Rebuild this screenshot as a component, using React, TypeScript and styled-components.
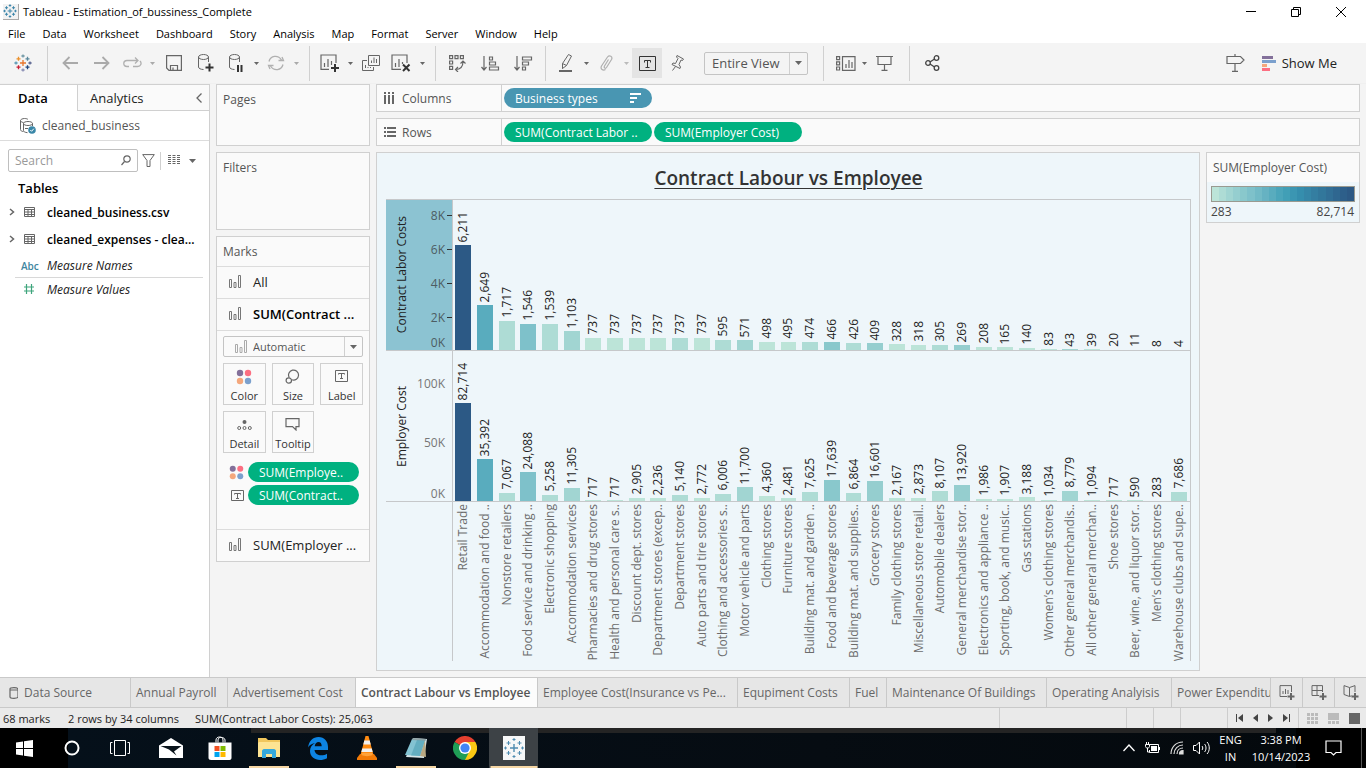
import React from "react";
import styled, { createGlobalStyle } from "styled-components";

const GlobalStyle = createGlobalStyle`
  *, *::before, *::after { box-sizing: border-box; }
  body { margin: 0; font-family: "Open Sans", "Noto Sans", sans-serif; font-size: 12px; color: #333; background: #f4f4f4; }
  button, input, select { font: inherit; color: inherit; }
  button { border: 0; padding: 0; margin: 0; background: none; display: flex; align-items: center; }
  a { color: inherit; text-decoration: none; }
  h1, h2, p, ul { margin: 0; padding: 0; font-weight: inherit; list-style: none; }
  svg { display: block; flex: none; }
`;

const line = "#d0d0d0";
const panel = "#fafafa";
const sheet = "#eef6fa";

/* ---------- data ---------- */

const steps = [
  "#bce4d8", "#aedcd5", "#a1d5d2", "#95cecf", "#89c8cc", "#7ec1ca", "#72bac6", "#66b2c2", "#59acbe", "#4ba5ba",
  "#419fb6", "#3b96b2", "#358ead", "#3586a7", "#347ea1", "#32779b", "#316f96", "#2f6790", "#2d5f8a", "#2c5985",
];

const stepFor = (cost: number) =>
  steps[Math.min(steps.length - 1, Math.floor(((cost - 283) / (82714 - 283)) * steps.length))];

type Business = [name: string, labor: number, employer: number];

const businesses: Business[] = [
  ["Retail Trade", 6211, 82714],
  ["Accommodation and food ..", 2649, 35392],
  ["Nonstore retailers", 1717, 7067],
  ["Food service and drinking ..", 1546, 24088],
  ["Electronic shopping", 1539, 5258],
  ["Accommodation services", 1103, 11305],
  ["Pharmacies and drug stores", 737, 717],
  ["Health and personal care s..", 737, 717],
  ["Discount dept. stores", 737, 2905],
  ["Department stores (excep..", 737, 2236],
  ["Department stores", 737, 5140],
  ["Auto parts and tire stores", 737, 2772],
  ["Clothing and accessories s..", 595, 6006],
  ["Motor vehicle and parts", 571, 11700],
  ["Clothing stores", 498, 4360],
  ["Furniture stores", 495, 2481],
  ["Building mat. and garden ..", 474, 7625],
  ["Food and beverage stores", 466, 17639],
  ["Building mat. and supplies..", 426, 6864],
  ["Grocery stores", 409, 16601],
  ["Family clothing stores", 328, 2167],
  ["Miscellaneous store retail..", 318, 2873],
  ["Automobile dealers", 305, 8107],
  ["General merchandise stor..", 269, 13920],
  ["Electronics and appliance ..", 208, 1986],
  ["Sporting, book, and music..", 165, 1907],
  ["Gas stations", 140, 3188],
  ["Women’s clothing stores", 83, 1034],
  ["Other general merchandis..", 43, 8779],
  ["All other general merchan..", 39, 1094],
  ["Shoe stores", 20, 717],
  ["Beer, wine, and liquor stor..", 11, 590],
  ["Men’s clothing stores", 8, 283],
  ["Warehouse clubs and supe..", 4, 7686],
];

/* ---------- icons ---------- */

type IconProps = { w: number; h: number; color?: string; sw?: number; children: React.ReactNode };
const Icon = ({ w, h, color = "#666", sw = 1, children }: IconProps) => (
  <svg width={w} height={h} viewBox={`0 0 ${w} ${h}`} fill="none" stroke={color} strokeWidth={sw} aria-hidden="true">
    {children}
  </svg>
);

const plus = (x: number, y: number, r: number) => `M${x - r} ${y}h${2 * r}M${x} ${y - r}v${2 * r}`;

const TableauMark = ({ size = 18, mono, sw = 1.3 }: { size?: number; mono?: string; sw?: number }) => {
  const c = (color: string) => mono ?? color;
  return (
    <svg width={size} height={size} viewBox="0 0 18 18" fill="none" strokeWidth={sw} aria-hidden="true">
      <path d={plus(9, 9, 3)} stroke={c("#e8762c")} />
      <path d={plus(4.5, 4.8, 2)} stroke={c("#eb912c")} />
      <path d={plus(13.5, 4.8, 2)} stroke={c("#59879b")} />
      <path d={plus(4.5, 13.2, 2)} stroke={c("#c72035")} />
      <path d={plus(13.5, 13.2, 2)} stroke={c("#1f447e")} />
      <path d={plus(9, 2, 1.6)} stroke={c("#7199a6")} />
      <path d={plus(9, 16, 1.6)} stroke={c("#8a8fb5")} />
      <path d={plus(2, 9, 1.6)} stroke={c("#5c9bb5")} />
      <path d={plus(16, 9, 1.6)} stroke={c("#5b6591")} />
    </svg>
  );
};

const Caret = ({ color = "#666", big }: { color?: string; big?: boolean }) => (
  <svg width={big ? 7 : 5} height={big ? 4 : 3} viewBox="0 0 6 4" preserveAspectRatio="none" aria-hidden="true">
    <path d="M0 0h6L3 4z" fill={color} />
  </svg>
);

const BarsIcon = ({ color = "#777" }: { color?: string }) => (
  <Icon w={12} h={13} color={color}>
    <path d="M.5 4.500h2v8h-2zM5 7.500h2v5h-2zM9.500 .5h2v12h-2z" />
  </Icon>
);

const TextIcon = ({ w = 13, h = 11, color = "#666" }: { w?: number; h?: number; color?: string }) => (
  <Icon w={w} h={h} color={color}>
    <path d={`M.5 .5h${w - 1}v${h - 1}h${1 - w}z`} />
    {w > 14 ? (
      <path d="M5.500 6.500v-2h6v2M8.500 4.500v7M6.500 11.500h4" />
    ) : (
      <path d="M3.500 4.500v-1h6v1M6.500 3.500v5M5 8.500h3" />
    )}
  </Icon>
);

const DotsIcon = ({ size = 16 }: { size?: number }) => (
  <svg width={size} height={size} viewBox="0 0 16 16" aria-hidden="true">
    <circle cx="4" cy="4" r="3.200" fill="#83709a" />
    <circle cx="12" cy="4" r="3.200" fill="#fc6f82" />
    <circle cx="4" cy="12" r="3.200" fill="#f4a77c" />
    <circle cx="12" cy="12" r="3.200" fill="#7ba0cd" />
  </svg>
);

const Cylinder = () => <path d="M.5 3v10c0 1.400 2.300 2.500 5 2.500M10.500 8V3M.5 3c0-1.400 2.300-2.500 5-2.500s5 1.100 5 2.500-2.300 2.500-5 2.500S.5 4.400.5 3z" />;

const TableIcon = () => (
  <Icon w={11} h={10}>
    <path d="M.5 .5h10v9h-10zM.5 2.500h10M.5 5h10M.5 7.500h10M4 2.500v7M7.500 2.500v7" />
  </Icon>
);

const Chevron = () => (
  <Icon w={6} h={8} sw={1.5}>
    <path d="M1 1l3.500 3L1 7" />
  </Icon>
);

/* ---------- window chrome ---------- */

const Window = styled.div`
  min-height: 100vh;
  display: flex;
  flex-direction: column;
`;

const TitleBar = styled.header`
  height: 23px;
  display: flex;
  align-items: center;
  padding: 0 3px;
  background: #fff;
  color: #000;
  font-size: 11px;
`;

const AppBadge = styled.span`
  display: flex;
  padding: 0 1px 1px 0;
  margin-right: 4px;
  border-right: 1px solid #aaa;
  border-bottom: 1px solid #aaa;
  background: #f2f2f2;
`;

const TitleText = styled.span`
  flex: 1;
`;

const WindowButton = styled.button`
  width: 45px;
  height: 20px;
  justify-content: center;
`;

const MenuBar = styled.nav`
  height: 20px;
  display: flex;
  align-items: center;
  background: #fff;
  color: #000;
  font-size: 11px;
  button { padding: 0 9px 0 8px; height: 20px; }
`;

/* ---------- toolbar ---------- */

const Toolbar = styled.div`
  height: 41px;
  display: flex;
  align-items: center;
  padding: 0 29px 0 6px;
  background: #f4f4f4;
  border-bottom: 1px solid #f0f0f0;
`;

const ToolButton = styled.button<{ $w?: number; $on?: boolean }>`
  width: ${(p) => p.$w ?? 28}px;
  height: 30px;
  flex: none;
  justify-content: center;
  background: ${(p) => (p.$on ? "#e4e4e4" : "transparent")};
`;

const ToolRule = styled.span`
  width: 1px;
  height: 35px;
  margin: 0 6px 0 7px;
  background: #d0d0d0;
`;

const ToolSpacer = styled.span`
  flex: 1;
`;

const ShowMe = styled.button`
  gap: 6px;
  margin-left: 12px;
  font-size: 13px;
  color: #222;
`;

const SelectBox = styled.div<{ $h: number; $size: number; $left: number }>`
  position: relative;
  height: ${(p) => p.$h}px;
  select {
    appearance: none;
    width: 100%;
    height: 100%;
    padding: 0 20px 0 ${(p) => p.$left}px;
    border: 1px solid #c4c4c4;
    border-radius: 2px;
    background: transparent;
    font-size: ${(p) => p.$size}px;
    color: #555;
  }
`;

const SelectArrow = styled.span`
  position: absolute;
  inset: 1px 1px 1px auto;
  width: 18px;
  display: flex;
  align-items: center;
  justify-content: center;
  border-left: 1px solid ${line};
  pointer-events: none;
`;

const SelectGlyph = styled.span`
  position: absolute;
  inset: 0 auto 0 12px;
  display: flex;
  align-items: center;
  pointer-events: none;
`;

const FitSelect = styled(SelectBox)`
  width: 104px;
  margin: 0 8px 0 12px;
`;

/* ---------- data pane ---------- */

const Workspace = styled.main`
  flex: 1;
  display: flex;
`;

const DataPane = styled.aside`
  width: 210px;
  flex: none;
  background: #fff;
  border-right: 1px solid ${line};
  border-top: 1px solid ${line};
`;

const PaneTabs = styled.div`
  height: 26px;
  display: flex;
  font-size: 13px;
`;

const PaneTab = styled.button<{ $active?: boolean }>`
  ${(p) =>
    p.$active
      ? "width: 77px; padding-left: 18px; font-weight: 600; color: #000;"
      : `flex: 1; padding: 0 7px 0 12px; justify-content: space-between; color: #222; background: ${panel}; border-left: 1px solid ${line}; border-bottom: 1px solid ${line};`}
`;

const SourceRow = styled.button`
  width: 100%;
  height: 30px;
  gap: 6px;
  padding-left: 20px;
  border-bottom: 1px solid #dcdcdc;
  color: #555;
`;

const SearchRow = styled.div`
  display: flex;
  align-items: center;
  padding: 8px 12px 0 8px;
`;

const SearchField = styled.label`
  width: 130px;
  height: 23px;
  display: flex;
  align-items: center;
  padding: 0 6px;
  border: 1px solid #bfbfbf;
  border-radius: 2px;
  input {
    flex: 1;
    min-width: 0;
    padding: 0;
    border: 0;
    outline: 0;
    background: none;
  }
  input::placeholder { color: #999; opacity: 1; }
`;

const SearchRule = styled.span`
  width: 1px;
  height: 18px;
  margin: 0 7px 0 5px;
  background: ${line};
`;

const SmallButton = styled.button<{ $left?: number }>`
  margin-left: ${(p) => p.$left ?? 0}px;
`;

const TablesTitle = styled.h2`
  padding: 7px 0 3px 18px;
  font-size: 13px;
  line-height: 18px;
  font-weight: 600;
  color: #000;
`;

const TableRow = styled.li`
  height: 27px;
  display: grid;
  grid-template-columns: 15px 23px 1fr;
  align-items: center;
  padding: 0 8px 3px 9px;
  font-weight: 600;
  color: #000;
  white-space: nowrap;
`;

const FieldRow = styled.li`
  height: 23px;
  display: grid;
  grid-template-columns: 32px 1fr;
  align-items: center;
  margin: 0 6px 0 15px;
  font-style: italic;
  color: #222;
  & + & { border-top: 1px solid #d8d8d8; }
`;

const FieldType = styled.span`
  padding-left: 6px;
  font-size: 10px;
  font-style: normal;
  font-weight: 600;
  color: #3f86a0;
`;

/* ---------- cards ---------- */

const Board = styled.div`
  flex: 1;
  min-width: 0;
  display: flex;
  gap: 6px;
  padding: 0 6px 6px;
`;

const CardColumn = styled.div`
  width: 154px;
  flex: none;
  display: flex;
  flex-direction: column;
  gap: 6px;
`;

const Card = styled.section<{ $h?: number }>`
  min-height: ${(p) => p.$h ?? 0}px;
  background: ${panel};
  border: 1px solid ${line};
`;

const CardTitle = styled.h2`
  padding: 0 6px;
  font-size: 12px;
  line-height: 29px;
  color: #555;
`;

const MarkRow = styled.button<{ $bold?: boolean }>`
  width: 100%;
  height: 32px;
  gap: 12px;
  padding: 0 0 2px 12px;
  border-top: 1px solid #dcdcdc;
  font-size: 13px;
  font-weight: ${(p) => (p.$bold ? 600 : 400)};
  color: ${(p) => (p.$bold ? "#000" : "#222")};
  white-space: nowrap;
`;

const MarkBody = styled.div`
  padding: 5px 6px 24px;
  border-top: 1px solid #dcdcdc;
`;

const MarkGrid = styled.div`
  display: grid;
  grid-template-columns: repeat(3, 1fr);
  gap: 6px;
  padding: 6px 0 9px;
`;

const MarkButton = styled.button`
  height: 42px;
  flex-direction: column;
  justify-content: space-between;
  padding: 5px 0 1px;
  border: 1px solid ${line};
  font-size: 11px;
  line-height: 15px;
  color: #333;
`;

const EncodedRow = styled.div`
  height: 20px;
  display: grid;
  grid-template-columns: 25px 111px;
  align-items: center;
  & + & { margin-top: 3px; }
  > svg { justify-self: end; margin-right: 4px; }
`;

const Pill = styled.button<{ $blue?: boolean; $w?: number }>`
  width: ${(p) => (p.$w ? `${p.$w}px` : "auto")};
  height: 20px;
  justify-content: space-between;
  padding: 0 11px;
  border-radius: 10px;
  background: ${(p) => (p.$blue ? "#4996b2" : "#00b180")};
  color: #fff;
  white-space: nowrap;
`;

/* ---------- shelves ---------- */

const Main = styled.div`
  flex: 1;
  min-width: 0;
  display: flex;
  flex-direction: column;
  gap: 6px;
`;

const Shelf = styled.div`
  height: 28px;
  display: flex;
  align-items: center;
  gap: 2px;
  background: ${panel};
  border: 1px solid ${line};
`;

const ShelfLabel = styled.span`
  width: 125px;
  height: 100%;
  display: grid;
  grid-template-columns: 18px 1fr;
  align-items: center;
  padding-left: 7px;
  border-right: 1px solid ${line};
  color: #555;
`;

const ViewRow = styled.div`
  flex: 1;
  display: flex;
  align-items: flex-start;
  gap: 6px;
`;

/* ---------- chart ---------- */

const View = styled.section`
  flex: 1;
  min-width: 0;
  align-self: stretch;
  display: flex;
  flex-direction: column;
  padding: 0 8px 9px 9px;
  background: ${sheet};
  border: 1px solid ${line};
`;

const ChartTitle = styled.h1`
  padding: 12px 0 8px;
  font-size: 19px;
  line-height: 26px;
  font-weight: 600;
  text-align: center;
  text-decoration: underline;
  text-decoration-thickness: 1px;
  text-underline-offset: 3px;
  color: #333;
`;

const ChartBand = styled.div<{ $names?: boolean }>`
  flex: ${(p) => (p.$names ? "0 0 160px" : "1 0 151px")};
  display: grid;
  grid-template-columns: 66px minmax(0, 1fr);
  border-top: 1px solid #c6c8ca;
`;

const AxisHead = styled.div<{ $selected?: boolean }>`
  position: relative;
  display: flex;
  align-items: center;
  padding-left: 8px;
  background: ${(p) => (p.$selected ? "#8cc3d2" : "transparent")};
  color: ${(p) => (p.$selected ? "#4d5d63" : "#777")};
`;

const Upright = styled.span`
  writing-mode: vertical-rl;
  transform: rotate(180deg);
  white-space: nowrap;
  line-height: 16px;
`;

const AxisTitle = styled(Upright)`
  color: #222;
`;

const Tick = styled.span<{ $dash?: boolean }>`
  position: absolute;
  right: 0;
  display: flex;
  align-items: center;
  gap: 2px;
  height: 16px;
  margin-bottom: -9px;
  &::after {
    content: "";
    width: 5px;
    height: 1px;
    background: ${(p) => (p.$dash ? "#333" : "transparent")};
  }
`;

const Plot = styled.div`
  display: grid;
  grid-template-columns: repeat(34, minmax(0, 1fr));
  border-left: 1px solid #c6c8ca;
  border-right: 1px solid #c6c8ca;
`;

const BarCell = styled.div`
  min-width: 0;
  display: flex;
  flex-direction: column;
  justify-content: flex-end;
  align-items: center;
  padding-right: 1px;
  color: #222;
`;

const BarValue = styled(Upright)`
  margin-bottom: 3px;
`;

const Bar = styled.span`
  width: 77%;
  flex: none;
`;

const NameCell = styled.div`
  min-width: 0;
  display: flex;
  justify-content: center;
  align-items: flex-start;
  padding: 2px 1px 0 0;
  color: #6c6c6c;
`;

type PaneProps = { title: string; field: 1 | 2; domain: number; ticks: number[]; selected?: boolean };

const ChartPane = ({ title, field, domain, ticks, selected }: PaneProps) => (
  <ChartBand>
    <AxisHead $selected={selected}>
      <AxisTitle>{title}</AxisTitle>
      {ticks.map((t) => (
        <Tick key={t} $dash={selected && t > 0} style={{ bottom: `${Math.max(6, (t / domain) * 100)}%` }}>
          {t / 1000}K
        </Tick>
      ))}
    </AxisHead>
    <Plot>
      {businesses.map((b) => (
        <BarCell key={b[0]}>
          <BarValue>{b[field].toLocaleString("en-US")}</BarValue>
          <Bar style={{ height: `${(b[field] / domain) * 100}%`, background: stepFor(b[2]) }} />
        </BarCell>
      ))}
    </Plot>
  </ChartBand>
);

/* ---------- legend ---------- */

const Legend = styled(Card)`
  width: 154px;
  flex: none;
  background: ${sheet};
`;

const LegendTitle = styled(CardTitle)`
  background: ${panel};
`;

const Ramp = styled.div`
  height: 16px;
  display: flex;
  margin: 4px 4px 0;
  border: 1px solid #9a9a90;
`;

const RampStep = styled.span<{ $color: string }>`
  flex: 1;
  background: ${(p) => p.$color};
`;

const RampEnds = styled.div`
  display: flex;
  justify-content: space-between;
  padding: 1px 5px 1px 4px;
  line-height: 18px;
  color: #444;
`;

/* ---------- sheet tabs and status ---------- */

const SheetTabs = styled.nav`
  height: 31px;
  display: flex;
  background: #e6e6e6;
  border-top: 1px solid #c9c9c9;
  border-bottom: 1px solid #c9c9c9;
  color: #666;
`;

const TabStrip = styled.div`
  flex: 1;
  min-width: 0;
  display: flex;
  overflow: hidden;
`;

const SheetTab = styled.button<{ $w: number; $active?: boolean }>`
  flex: 0 0 ${(p) => p.$w}px;
  gap: 6px;
  padding-left: 5px;
  border-right: 1px solid #c9c9c9;
  white-space: nowrap;
  font-weight: ${(p) => (p.$active ? 600 : 400)};
  color: ${(p) => (p.$active ? "#555" : "#666")};
  background: ${(p) => (p.$active ? "#fcfcfc" : "transparent")};
`;

const NewButton = styled.button`
  width: 32px;
  justify-content: center;
  border-left: 1px solid #c9c9c9;
`;

const StatusBar = styled.footer`
  height: 20px;
  display: flex;
  align-items: center;
  background: #eaeaea;
  font-size: 11px;
  color: #222;
`;

const StatusText = styled.span<{ $w?: number }>`
  padding-left: 3px;
  ${(p) => (p.$w ? `width: ${p.$w}px;` : "flex: 1;")}
`;

const StatusCell = styled.span<{ $w: number }>`
  width: ${(p) => p.$w}px;
  height: 20px;
  display: flex;
  align-items: center;
  gap: 10px;
  padding-left: 8px;
  border-left: 1px solid #cdcdcd;
`;

/* ---------- taskbar ---------- */

const Taskbar = styled.footer`
  height: 40px;
  display: flex;
  color: #fff;
  font-size: 11px;
  background:
    linear-gradient(#242424, #242424) no-repeat 251px 0 / calc(100% - 341px) 5px,
    linear-gradient(90deg, #000 68px, #05101a 68px, #060c12 60%, #04090d calc(100% - 70px), #000 calc(100% - 70px));
`;

const TaskButton = styled.button<{ $w?: number; $line?: number; $active?: boolean }>`
  position: relative;
  width: ${(p) => p.$w ?? 49}px;
  height: 40px;
  justify-content: center;
  background: ${(p) => (p.$active ? "#3d4246" : "transparent")};
  &::after {
    content: "";
    position: absolute;
    bottom: 0;
    left: 50%;
    width: ${(p) => p.$line ?? 0}px;
    height: 2px;
    transform: translateX(-50%);
    background: #f5d6a4;
  }
`;

const TaskGroup = styled.div`
  flex: 1;
  display: flex;
  padding-left: 2px;
`;

const Tray = styled.div`
  display: flex;
  align-items: center;
  padding-right: 4px;
`;

const TrayButton = styled.button<{ $w: number }>`
  width: ${(p) => p.$w}px;
  height: 40px;
  flex-direction: column;
  justify-content: center;
  line-height: 17px;
`;

const TrayEdge = styled.span`
  width: 1px;
  height: 40px;
  background: #555;
`;

const menus = ["File", "Data", "Worksheet", "Dashboard", "Story", "Analysis", "Map", "Format", "Server", "Window", "Help"];

const sheets: [string, number][] = [
  ["Annual Payroll", 97],
  ["Advertisement Cost", 128],
  ["Contract Labour vs Employee", 182],
  ["Employee Cost(Insurance vs Pe...", 200],
  ["Equpiment Costs", 112],
  ["Fuel", 37],
  ["Maintenance Of Buildings", 160],
  ["Operating Analyisis", 125],
  ["Power Expenditu", 140],
];

const DropCaret = ({ color }: { color?: string }) => (
  <ToolButton $w={12} aria-label="More options">
    <Caret color={color} />
  </ToolButton>
);

const MainToolbar = () => (
  <Toolbar>
    <ToolButton $w={34} aria-label="Start page"><TableauMark /></ToolButton>
    <ToolRule />
    <ToolButton $w={32} aria-label="Undo">
      <Icon w={16} h={14} color="#aaa" sw={1.8}><path d="M16 7H1.500M7.500 1L1.500 7l6 6" /></Icon>
    </ToolButton>
    <ToolButton $w={32} aria-label="Redo">
      <Icon w={16} h={14} color="#aaa" sw={1.8}><path d="M0 7h14.500M8.500 1l6 6-6 6" /></Icon>
    </ToolButton>
    <ToolButton aria-label="Replay">
      <Icon w={19} h={12} color="#b0b0b0" sw={1.3}><path d="M6 9.500H4C-.3 9.500-.3 3.500 4 3.500h10.500M12 .5l3 3-3 3M10 9.500h4.500c3.500 0 4.500-3.500 2.500-5.500" /></Icon>
    </ToolButton>
    <DropCaret color="#aaa" />
    <ToolButton $w={32} aria-label="Save">
      <Icon w={16} h={16} sw={1.2}><path d="M.6 .6h14.800v14.800H3L.6 13zM4.500 15v-4.500h7V15M7 12.500V15" /></Icon>
    </ToolButton>
    <ToolButton $w={32} aria-label="New data source">
      <Icon w={16} h={18}><Cylinder /><path d="M11.500 9.500v8M7.500 13.500h8" stroke="#333" strokeWidth="2" /></Icon>
    </ToolButton>
    <ToolButton aria-label="Pause auto updates">
      <Icon w={14} h={18}><Cylinder /><path d="M9 11v7M12.500 11v7" stroke="#333" strokeWidth="2" /></Icon>
    </ToolButton>
    <DropCaret />
    <ToolButton aria-label="Run update">
      <Icon w={18} h={16} color="#b0b0b0" sw={1.3}><path d="M2 6.500C3.500 .5 11 -.5 14.500 5M16 9.500C14.500 15.500 7 16.500 3.500 11M11.500 5.500h5L15 2M6.500 10.500h-5L3 14" /></Icon>
    </ToolButton>
    <DropCaret color="#aaa" />
    <ToolRule />
    <ToolButton aria-label="New worksheet">
      <Icon w={20} h={18} sw={1.2}><path d="M9 15.400H1V1h15v8M4.500 13V9M8 13V5M11.500 11V7" /><path d="M15 10v8M11 14h8" stroke="#333" strokeWidth="2" /></Icon>
    </ToolButton>
    <DropCaret />
    <ToolButton $w={30} aria-label="Duplicate">
      <Icon w={18} h={16}><path d="M6.500 .5h11v10h-11zM5 5.500H.5v10h11V12M9.500 8V5.500M12 8V2.500M14.500 8V4M3.500 13V10M6 13v-1M8.500 13v-1" /></Icon>
    </ToolButton>
    <ToolButton $w={30} aria-label="Clear sheet">
      <Icon w={20} h={18} sw={1.2}><path d="M10 15.400H1V1h15v8M4.500 13V9M8 13V5M11.500 10V8" /><path d="M12 10.500l6.500 6.500M18.500 10.500L12 17" stroke="#333" strokeWidth="2" /></Icon>
    </ToolButton>
    <DropCaret />
    <ToolRule />
    <ToolButton $w={30} aria-label="Swap rows and columns">
      <Icon w={17} h={17} sw={1.2}><path d="M.6 .6h3v3h-3zM6 .6h3v3h-3zM11.400 .6h3v3h-3zM.6 6h3v3h-3zM.6 11.400h3v3h-3zM14 6.500c0 5-2 8-7.500 8M11.500 8.500L14 6l2.500 2.500M9 12l-2.500 2.500L9 17" /></Icon>
    </ToolButton>
    <ToolButton $w={36} aria-label="Sort ascending">
      <Icon w={19} h={15} sw={1.2}><path d="M3 0v14M.5 11L3 14l2.500-3M8.500 1h3v3h-3zM8.500 6h6v3h-6zM8.500 11h9v3h-9z" /></Icon>
    </ToolButton>
    <ToolButton $w={30} aria-label="Sort descending">
      <Icon w={19} h={15} sw={1.2}><path d="M3 0v14M.5 11L3 14l2.500-3M8.500 1h9v3h-9zM8.500 6h6v3h-6zM8.500 11h3v3h-3z" /></Icon>
    </ToolButton>
    <ToolRule />
    <ToolButton aria-label="Highlight">
      <Icon w={14} h={18}><path d="M9.500 .5l3 1.500-5 9.500-4 3v-5zM3.500 9.500l4 2M3.500 14.500v-2" /><path d="M0 17h13" strokeWidth="2" /></Icon>
    </ToolButton>
    <DropCaret />
    <ToolButton aria-label="Group members">
      <Icon w={13} h={16} color="#b0b0b0" sw={1.2}><path d="M8.500 4.500l-4 6.500c-1 2 1 3 2 1.500l5-8c1.500-3-2-5-4-2.500l-6 9c-1.500 3 1.500 5 4 3.500" /></Icon>
    </ToolButton>
    <DropCaret color="#bbb" />
    <ToolButton $w={30} $on aria-label="Show mark labels"><TextIcon w={17} h={15} color="#333" /></ToolButton>
    <ToolButton $w={30} aria-label="Fix axes">
      <Icon w={13} h={16}><path d="M6 .5l6.500 3.500-1 1.500-1.500-.5-2 4.500 1.500 2.500-.5 1.500-8-4 1-1.500 2.500.5L7 3.500 5.500 2zM4.500 11.500l-3 4" /></Icon>
    </ToolButton>
    <FitSelect $h={23} $size={13} $left={7}>
      <select aria-label="Fit" defaultValue="Entire View"><option>Entire View</option><option>Standard</option></select>
      <SelectArrow><Caret big /></SelectArrow>
    </FitSelect>
    <ToolRule />
    <ToolButton $w={32} aria-label="Show or hide cards">
      <Icon w={20} h={15} sw={1.2}><path d="M.6 .6h3v3h-3zM.6 5.800h3v3h-3zM.6 11h3v3h-3zM6.500 .6H19v13.800H6.500zM10 12V8M13 12V4M16 12V6" /></Icon>
    </ToolButton>
    <Caret />
    <ToolButton $w={35} aria-label="Presentation mode">
      <Icon w={17} h={16} sw={1.2}><path d="M0 1.500h17M2 2v7.500h13V2M8.500 9.500V15M5.500 15.400h6" /></Icon>
    </ToolButton>
    <ToolRule />
    <ToolButton $w={32} aria-label="Share">
      <Icon w={15} h={16} color="#444" sw={1.3}><circle cx="3" cy="8" r="2.300" /><circle cx="11.500" cy="3" r="2.300" /><circle cx="11.500" cy="13" r="2.300" /><path d="M5 7l4.500-3M5 9l4.500 3" /></Icon>
    </ToolButton>
    <ToolSpacer />
    <ToolButton aria-label="Guide">
      <Icon w={19} h={18} sw={1.2}><path d="M9 0v2M1 2.500h13.500L18 6l-3.500 3.500H1zM9 9.500V17M6 17.400h6" /></Icon>
    </ToolButton>
    <ShowMe>
      <svg width="14" height="15" viewBox="0 0 14 15" aria-hidden="true">
        <path d="M0 0h11v3H0z" fill="#83709a" /><path d="M0 4h14v3H0z" fill="#7ba0cd" />
        <path d="M0 8h5v3H0z" fill="#f4a77c" /><path d="M0 12h8v3H0z" fill="#fc6f82" />
      </svg>
      Show Me
    </ShowMe>
  </Toolbar>
);

const FieldsPane = () => (
  <DataPane>
    <PaneTabs>
      <PaneTab $active>Data</PaneTab>
      <PaneTab>
        Analytics
        <Icon w={6} h={10} sw={1.3}><path d="M5.500 .5L1 5l4.500 4.500" /></Icon>
      </PaneTab>
    </PaneTabs>
    <SourceRow>
      <Icon w={16} h={16}>
        <path d="M.5 2.500v9c0 1 1 2 3 2M.5 2.500c0-1 2-2 4-2s3 .5 3.500 1M.5 2.500c0 1 1 1.800 3 2M3.500 5.500c0-1.200 2-2 4.500-2s4.500.8 4.500 2-2 2-4.500 2-4.500-.8-4.500-2zM3.500 5.500v7c0 1 1.500 2 4 2.200M12.500 5.500V8M5 10.500h3" />
        <circle cx="12" cy="12" r="3.800" fill="#3a87a8" stroke="none" />
        <path d="M10.300 12l1.300 1.300 2.200-2.600" stroke="#fff" />
      </Icon>
      cleaned_business
    </SourceRow>
    <SearchRow>
      <SearchField>
        <input type="text" placeholder="Search" aria-label="Search" />
        <Icon w={10} h={11} sw={1.2}><circle cx="6" cy="4" r="3.200" /><path d="M3.500 6.500L.5 10" /></Icon>
      </SearchField>
      <SmallButton $left={4} aria-label="Filter fields">
        <Icon w={13} h={13}><path d="M.7 .6h11.600L8 6.500v6H5v-6z" /></Icon>
      </SmallButton>
      <SearchRule />
      <SmallButton aria-label="View">
        <Icon w={12} h={11}><path d="M0 .5h12M0 2.500h12M0 4.500h12M0 6.500h12M0 8.500h12" strokeDasharray="3 1.500" /></Icon>
      </SmallButton>
      <SmallButton $left={9} aria-label="View options"><Caret big /></SmallButton>
    </SearchRow>
    <TablesTitle>Tables</TablesTitle>
    <ul>
      <TableRow><Chevron /><TableIcon />cleaned_business.csv</TableRow>
      <TableRow><Chevron /><TableIcon />cleaned_expenses - clea...</TableRow>
      <FieldRow><FieldType>Abc</FieldType>Measure Names</FieldRow>
      <FieldRow>
        <FieldType><Icon w={16} h={10} color="#3ea57c" sw={1.2}><path d="M5.500 0v10M10.500 0v10M3 3h10M3 7h10" /></Icon></FieldType>
        Measure Values
      </FieldRow>
    </ul>
  </DataPane>
);

const MarksCard = () => (
  <Card>
    <CardTitle>Marks</CardTitle>
    <MarkRow><BarsIcon />All</MarkRow>
    <MarkRow $bold><BarsIcon />SUM(Contract ...</MarkRow>
    <MarkBody>
      <SelectBox $h={21} $size={11} $left={29}>
        <select aria-label="Mark type" defaultValue="Automatic"><option>Automatic</option><option>Bar</option></select>
        <SelectGlyph><BarsIcon color="#aaa" /></SelectGlyph>
        <SelectArrow><Caret big /></SelectArrow>
      </SelectBox>
      <MarkGrid>
        <MarkButton><DotsIcon />Color</MarkButton>
        <MarkButton><Icon w={15} h={15} sw={1.2}><path d="M4.200 8.500A5 5 0 1 1 7 10.800" /><circle cx="3.800" cy="11.500" r="2.700" /></Icon>Size</MarkButton>
        <MarkButton><Icon w={13} h={13}><path d="M.5 1.500h12v11H.5zM3.500 5.500v-1h6v1M6.500 4.500v5M5 9.500h3" /></Icon>Label</MarkButton>
        <MarkButton>
          <Icon w={15} h={15}><circle cx="7.500" cy="5" r="2" fill="#666" stroke="none" /><circle cx="2.200" cy="11" r="1.500" /><circle cx="7.500" cy="11" r="1.500" /><circle cx="12.800" cy="11" r="1.500" /></Icon>
          Detail
        </MarkButton>
        <MarkButton><Icon w={15} h={14} sw={1.2}><path d="M1 1.600h13v8h-3v3.400L7.500 9.600H1z" /></Icon>Tooltip</MarkButton>
      </MarkGrid>
      <EncodedRow><DotsIcon size={15} /><Pill>SUM(Employe..</Pill></EncodedRow>
      <EncodedRow><TextIcon /><Pill>SUM(Contract..</Pill></EncodedRow>
    </MarkBody>
    <MarkRow><BarsIcon />SUM(Employer ...</MarkRow>
  </Card>
);

const NewBadge = () => <path d="M12 8v7M8.500 11.500h7" strokeWidth="2" />;

const SheetTabBar = () => (
  <SheetTabs>
    <TabStrip>
      <SheetTab $w={131}>
        <Icon w={13} h={12} sw={1.2}><path d="M5 2c0-1 1.500-1.300 4-1.300s4 .3 4 1.300v8c0 1-1.500 1.300-4 1.300S5 11 5 10zM5 3h8" /></Icon>
        Data Source
      </SheetTab>
      {sheets.map(([name, w]) => (
        <SheetTab key={name} $w={w} $active={name === "Contract Labour vs Employee"}>{name}</SheetTab>
      ))}
    </TabStrip>
    <NewButton aria-label="New worksheet"><Icon w={16} h={15}><path d="M8 11.500H1V.6h11.500V7M4 9V6M6.500 9V4M9 9V5" /><NewBadge /></Icon></NewButton>
    <NewButton aria-label="New dashboard"><Icon w={16} h={15}><path d="M8 10.500H1V.6h10.500V7M1 5.500h10.500M6 .6v10" /><NewBadge /></Icon></NewButton>
    <NewButton aria-label="New story"><Icon w={16} h={15}><path d="M6.500 2.500v9L1 9.500V.6l5.500 1.900L12 .6V7M6.500 11.500l2-.7" /><NewBadge /></Icon></NewButton>
  </SheetTabs>
);

const Status = () => (
  <StatusBar>
    <StatusText $w={65}>68 marks</StatusText>
    <StatusText $w={127}>2 rows by 34 columns</StatusText>
    <StatusText>SUM(Contract Labor Costs): 25,063</StatusText>
    <StatusCell $w={127} />
    <StatusCell $w={27} />
    <StatusCell $w={27} />
    <StatusCell $w={47} />
    <StatusCell $w={71}>
      <button aria-label="First sheet"><svg width="7" height="8" aria-hidden="true"><path d="M0 0h1v8H0zM7 0v8L2 4z" fill="#444" /></svg></button>
      <button aria-label="Previous sheet"><svg width="5" height="8" aria-hidden="true"><path d="M5 0v8L0 4z" fill="#444" /></svg></button>
      <button aria-label="Next sheet"><svg width="5" height="8" aria-hidden="true"><path d="M0 0v8l5-4z" fill="#444" /></svg></button>
      <button aria-label="Last sheet"><svg width="7" height="8" aria-hidden="true"><path d="M6 0h1v8H6zM0 0v8l5-4z" fill="#444" /></svg></button>
    </StatusCell>
    <StatusCell $w={68}>
      <button aria-label="Sheet sorter"><svg width="11" height="11" aria-hidden="true"><path d="M0 0h3v3H0zM4 0h3v3H4zM8 0h3v3H8zM0 4h3v3H0zM4 4h3v3H4zM8 4h3v3H8zM0 8h3v3H0zM4 8h3v3H4zM8 8h3v3H8z" fill="#bbb" /></svg></button>
      <button aria-label="Filmstrip"><svg width="11" height="11" aria-hidden="true"><path d="M0 0h11v7H0zM0 8h3v3H0zM4 8h3v3H4zM8 8h3v3H8z" fill="#bbb" /></svg></button>
      <button aria-label="Tabs"><svg width="11" height="11" aria-hidden="true"><path d="M0 0h11v11H0z" fill="#666" /></svg></button>
    </StatusCell>
  </StatusBar>
);

const SystemBar = () => (
  <Taskbar>
    <TaskButton $w={48} aria-label="Start">
      <svg width="17" height="17" viewBox="0 0 17 17" fill="#fff" aria-hidden="true"><path d="M0 2.500l7-1V8H0zM8 1.300L17 0v8H8zM0 9h7v6.500l-7-1zM8 9h9v8l-9-1.300z" /></svg>
    </TaskButton>
    <TaskButton $w={48} aria-label="Search"><Icon w={16} h={16} color="#fff" sw={2}><circle cx="8" cy="8" r="6.500" /></Icon></TaskButton>
    <TaskButton $w={48} aria-label="Task view">
      <Icon w={20} h={16} color="#fff"><path d="M4.500 .5h11v15h-11zM2.500 2.500h-2v11h2M17.500 2.500h2v11h-2" /></Icon>
    </TaskButton>
    <TaskGroup>
      <TaskButton aria-label="Mail">
        <svg width="24" height="20" viewBox="0 0 24 20" aria-hidden="true"><path d="M0 7.500L12 0l12 7.500V20H0z" fill="#fff" /><path d="M1.500 8h21L15 13.500l2.500 4L10 11.500z" fill="#0a141c" /></svg>
      </TaskButton>
      <TaskButton aria-label="Store">
        <svg width="24" height="24" viewBox="0 0 24 24" aria-hidden="true">
          <path d="M8 6.500V4c0-4 7-4 7 0v2.500M10 6.500V4c0-4 7-3 7 0v2.500" fill="none" stroke="#fff" />
          <path d="M.5 6.500h23V22c0 1-1 2-2 2H3c-1.500 0-2.500-1-2.500-2z" fill="#fff" />
          <path d="M6.500 10h5v5h-5z" fill="#f25022" /><path d="M12.500 10h5v5h-5z" fill="#7fba00" />
          <path d="M6.500 16h5v5h-5z" fill="#00a4ef" /><path d="M12.500 16h5v5h-5z" fill="#ffb900" />
        </svg>
      </TaskButton>
      <TaskButton $line={40} aria-label="File Explorer">
        <svg width="22" height="20" viewBox="0 0 22 20" aria-hidden="true">
          <path d="M0 0h8l2 2h12v17H0z" fill="#f0c65c" /><path d="M1 4h21v15H0V5z" fill="#fde493" />
          <path d="M4 20v-7c0-1 1-2 2-2h10c1 0 2 1 2 2v7h-4v-4H8v4z" fill="#35a9dc" />
        </svg>
      </TaskButton>
      <TaskButton aria-label="Edge">
        <svg width="20" height="23" viewBox="0 0 20 23" aria-hidden="true">
          <path d="M0 10.500C1 4 5 0 10.500 0 16.500 0 20 4.500 20 10v3H6.500c.3 3.500 3.500 5.300 6.500 5.300 2.500 0 4.500-.6 6-1.600v4.500c-2 1.200-4.500 1.800-7 1.800C6.500 23 2 19.500 2 14c0-3.500 2-6.500 5-8C3.500 6.500 1 8.500 0 10.500zM6.700 9.300h7C13.700 6.500 12.500 5 10.500 5S7 6.800 6.700 9.300z" fill="#0d84e3" />
        </svg>
      </TaskButton>
      <TaskButton aria-label="VLC">
        <svg width="20" height="24" viewBox="0 0 20 24" aria-hidden="true">
          <path d="M8.500 0h3l5 19H3.500z" fill="#ff8b12" /><path d="M7.300 4.500h5.400l1 4H6.300zM5.200 12.500h9.600l.9 3.500H4.300z" fill="#f1f1f1" />
          <path d="M3 18h14l3 4v2H0v-2z" fill="#f27a07" /><path d="M4.500 17h11v2c-3 1.500-8 1.500-11 0z" fill="#ffa23a" />
        </svg>
      </TaskButton>
      <TaskButton $line={40} aria-label="Notepad">
        <svg width="24" height="23" viewBox="0 0 24 23" aria-hidden="true">
          <path d="M9 1l14 1-3 19L2 20z" fill="#d7e6e8" /><path d="M8 2l13 1-5 16L1 18z" fill="#83c3d2" /><path d="M16 19l5-16 1 17z" fill="#b9a983" /><path d="M9 1l13 1-.5 2L8 3z" fill="#8fa3a6" />
          <path d="M13 3l8 .5-5 15.500-9-.500z" fill="#4fa0b4" opacity=".6" />
        </svg>
      </TaskButton>
      <TaskButton aria-label="Chrome">
        <svg width="24" height="24" viewBox="0 0 24 24" aria-hidden="true">
          <path d="M12 12L1.600 6A12 12 0 0 1 22.400 6z" fill="#e5402f" /><path d="M12 12V6h10.400A12 12 0 0 1 12 24z" fill="#fbc813" /><path d="M12 12l3.500 5L12 24A12 12 0 0 1 1.600 6z" fill="#1f9e56" />
          <circle cx="12" cy="12" r="6" fill="#fff" /><circle cx="12" cy="12" r="4.600" fill="#4285f4" />
        </svg>
      </TaskButton>
      <TaskButton $line={47} $active aria-label="Tableau">
        <svg width="22" height="24" viewBox="0 0 22 24" aria-hidden="true"><path d="M0 0h22v24H0z" fill="#f6f7f8" /><g fill="none" stroke="#4d8bb0"><path d={plus(11, 12, 4)} strokeWidth="1.400" /><path d={plus(5.500, 7, 2) + plus(16.500, 7, 2) + plus(5.500, 17, 2) + plus(16.500, 17, 2) + plus(11, 3.500, 1.500) + plus(11, 20.500, 1.500) + plus(2.500, 12, 1.500) + plus(19.500, 12, 1.500)} /></g></svg>
      </TaskButton>
    </TaskGroup>
    <Tray>
      <TrayButton $w={24} aria-label="Hidden icons"><Icon w={12} h={8} color="#fff" sw={1.3}><path d="M.5 7L6 1l5.500 6" /></Icon></TrayButton>
      <TrayButton $w={24} aria-label="Battery">
        <Icon w={16} h={12} color="#fff"><path d="M4.500 2.500h9v8h-9V8M14.500 5v3" /><path d="M6 4h6v5H6z" fill="#fff" stroke="none" /><path d="M.5 2.500h4v2c0 2-4 2-4 0zM1.500 0v2M3.500 0v2M2.500 6v4h2" /></Icon>
      </TrayButton>
      <TrayButton $w={24} aria-label="Network">
        <Icon w={14} h={14} color="#ddd" sw={1.2}><path d="M1 13C1 6 6 1 13 1M4 13c0-5 4-9 9-9M7 13c0-3.500 2.500-6 6-6" /><path d="M9.500 13c0-2 1.500-3.500 3.500-3.500V13z" fill="#ddd" /></Icon>
      </TrayButton>
      <TrayButton $w={24} aria-label="Volume">
        <Icon w={17} h={14} color="#fff"><path d="M.5 4.500h2.500l3.500-3.500v12L3 9.500H.5zM9 5c1 1 1 3 0 4M11.500 3c2 2 2 6 0 8M14 1c3 3 3 9 0 12" /></Icon>
      </TrayButton>
      <TrayButton $w={35}><span>ENG</span><span>IN</span></TrayButton>
      <TrayButton $w={66}><span>3:38 PM</span><span>10/14/2023</span></TrayButton>
      <TrayButton $w={39} aria-label="Notifications">
        <Icon w={17} h={16} color="#fff" sw={1.2}><path d="M1 1h15v11.500h-5L8.500 15 6 12.500H1z" /></Icon>
      </TrayButton>
      <TrayButton $w={8} aria-label="Show desktop" />
      <TrayEdge />
    </Tray>
  </Taskbar>
);

export default function App() {
  return (
    <>
      <GlobalStyle />
      <Window>
        <TitleBar>
          <AppBadge><TableauMark size={14} mono="#3d86ab" /></AppBadge>
          <TitleText>Tableau - Estimation_of_bussiness_Complete</TitleText>
          <WindowButton aria-label="Minimize"><Icon w={10} h={1} color="#000"><path d="M0 .5h10" /></Icon></WindowButton>
          <WindowButton aria-label="Restore"><Icon w={10} h={10} color="#000"><path d="M.5 2.500h7v7h-7zM2.500 2.500v-2h7v7h-2" /></Icon></WindowButton>
          <WindowButton aria-label="Close"><Icon w={10} h={10} color="#000"><path d="M0 0l10 10M10 0L0 10" /></Icon></WindowButton>
        </TitleBar>
        <MenuBar>
          {menus.map((m) => <button key={m}>{m}</button>)}
        </MenuBar>
        <MainToolbar />
        <Workspace>
          <FieldsPane />
          <Board>
            <CardColumn>
              <Card $h={62}><CardTitle>Pages</CardTitle></Card>
              <Card $h={78}><CardTitle>Filters</CardTitle></Card>
              <MarksCard />
            </CardColumn>
            <Main>
              <Shelf>
                <ShelfLabel>
                  <Icon w={10} h={12} sw={2}><path d="M1 0v2M5 0v2M9 0v2M1 3v9M5 3v9M9 3v9" /></Icon>
                  Columns
                </ShelfLabel>
                <Pill $blue $w={148}>
                  Business types
                  <Icon w={11} h={10} color="#fff" sw={2}><path d="M0 1h11M0 5h7M0 9h4" /></Icon>
                </Pill>
              </Shelf>
              <Shelf>
                <ShelfLabel>
                  <Icon w={12} h={10} sw={2}><path d="M0 1h2M0 5h2M0 9h2M3 1h9M3 5h9M3 9h9" /></Icon>
                  Rows
                </ShelfLabel>
                <Pill $w={148}>SUM(Contract Labor ..</Pill>
                <Pill $w={148}>SUM(Employer Cost)</Pill>
              </Shelf>
              <ViewRow>
                <View>
                  <ChartTitle>Contract Labour vs Employee</ChartTitle>
                  <ChartPane title="Contract Labor Costs" field={1} domain={8880} ticks={[8000, 6000, 4000, 2000, 0]} selected />
                  <ChartPane title="Employer Cost" field={2} domain={126500} ticks={[100000, 50000, 0]} />
                  <ChartBand $names>
                    <span />
                    <Plot>
                      {businesses.map(([name]) => (
                        <NameCell key={name}><Upright>{name}</Upright></NameCell>
                      ))}
                    </Plot>
                  </ChartBand>
                </View>
                <Legend>
                  <LegendTitle>SUM(Employer Cost)</LegendTitle>
                  <Ramp>{steps.map((c) => <RampStep key={c} $color={c} />)}</Ramp>
                  <RampEnds><span>283</span><span>82,714</span></RampEnds>
                </Legend>
              </ViewRow>
            </Main>
          </Board>
        </Workspace>
        <SheetTabBar />
        <Status />
        <SystemBar />
      </Window>
    </>
  );
}
